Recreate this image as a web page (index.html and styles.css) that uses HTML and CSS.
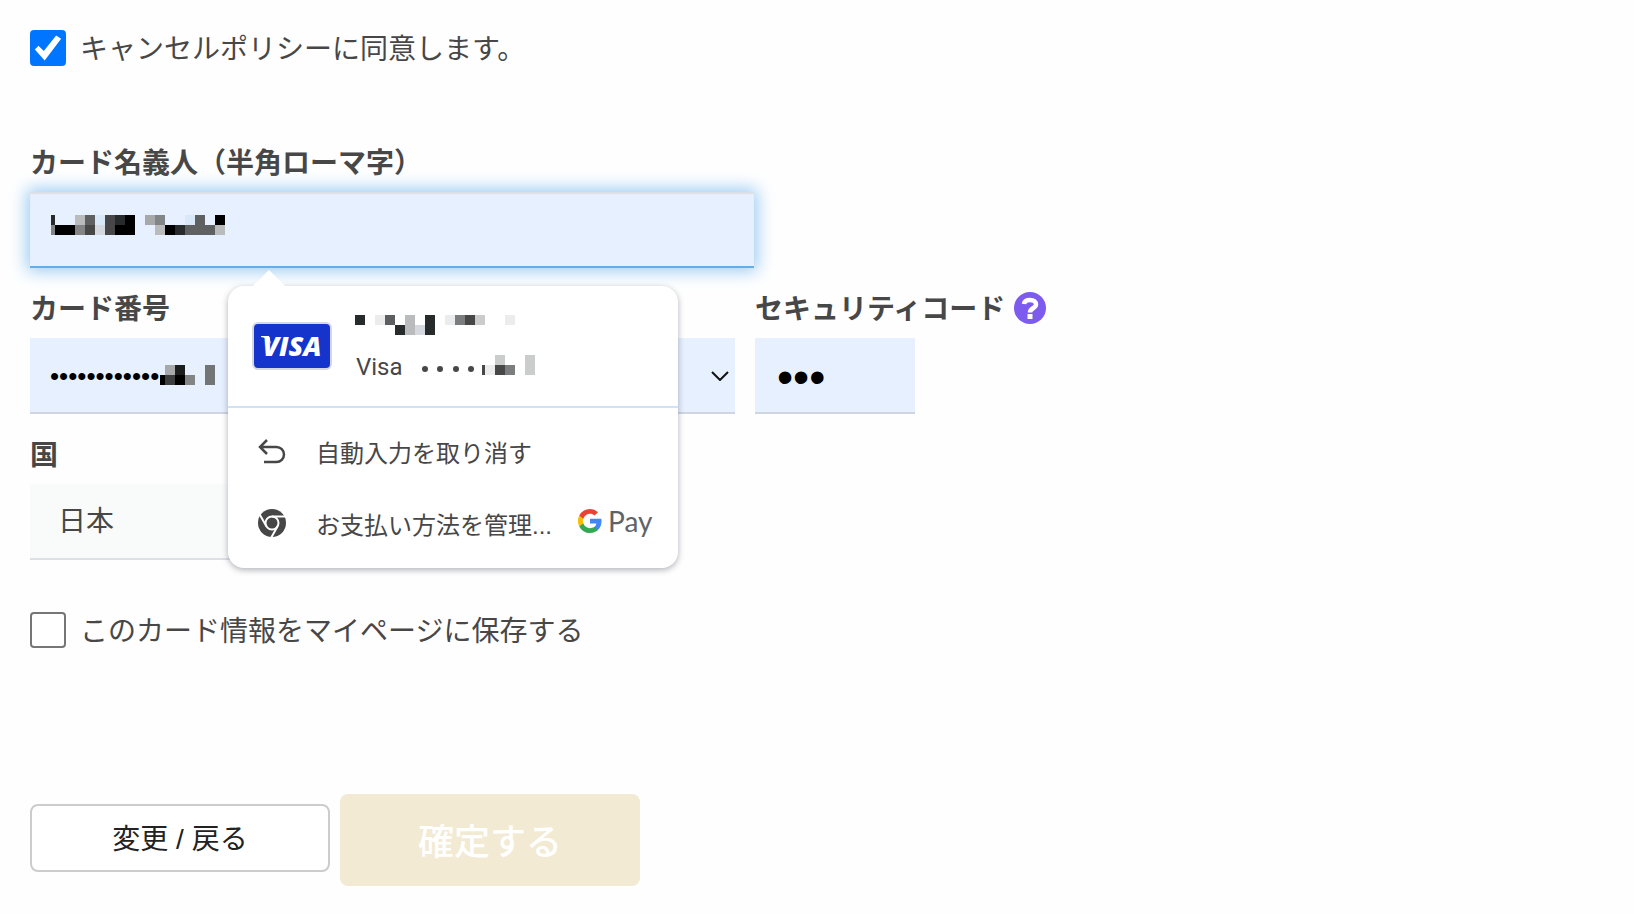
FILE: index.html
```html
<!DOCTYPE html>
<html lang="ja">
<head>
    <meta charset="utf-8">
    <meta name="viewport" content="width=device-width">
    <title>お支払い情報</title>
    <link rel="stylesheet" href="styles.css">
</head>
<body>

<form class="payment">
    <div class="check-row">
        <input class="check" type="checkbox" id="agree" checked>
        <label for="agree">キャンセルポリシーに同意します。</label>
    </div>

    <div class="fields">
        <div class="field field-name">
            <label class="field-label" for="holder">カード名義人（半角ローマ字）</label>
            <div class="control">
                <input class="text-input focused" type="text" id="holder">
                <svg class="mask mask-name" width="174" height="20" viewBox="0 0 174 20" shape-rendering="crispEdges" aria-hidden="true">
                    <path fill="#000" d="M4 10h20v10H4zM64 10h10v10H64zM74 0h10v20H74zM114 10h10v10h-10zM164 0h10v10h-10z"/>
                    <path fill="#282b2b" d="M0 0h4v10H0zM64 0h10v10H64zM124 10h10v10h-10z"/>
                    <path fill="#474747" d="M34 10h10v10H34zM54 0h10v20H54z"/>
                    <path fill="#5f6062" d="M34 0h10v10H34zM134 10h10v10h-10zM144 0h10v20h-10zM154 10h10v10h-10z"/>
                    <path fill="#828486" d="M0 10h4v10H0zM24 10h10v10H24zM104 0h10v10h-10z"/>
                    <path fill="#a6a8aa" d="M94 0h10v10H94z"/>
                    <path fill="#b9bbbd" d="M24 0h10v10H24zM104 10h10v10h-10zM164 10h10v10h-10z"/>
                    <path fill="#d5d8de" d="M44 10h10v10H44z"/>
                    <path fill="#d9e8f8" d="M44 0h10v10H44zM134 0h10v10h-10z"/>
                </svg>

                <div class="autofill">
                    <button class="autofill-card" type="button">
                        <span class="visa">
                            <svg class="visa-wing" width="10" height="8" viewBox="0 0 10 8" aria-hidden="true"><path fill="#fff" d="M0 0h8l2 8Q7 2 0 1z"/></svg>
                            VISA
                        </span>
                        <span class="card-info">
                            <svg width="160" height="20" viewBox="0 0 160 20" shape-rendering="crispEdges" aria-hidden="true">
                                <path fill="#282b2b" d="M0 0h10v10H0zM40 10h10v10H40zM70 0h10v20H70z"/>
                                <path fill="#5d5e60" d="M30 0h10v10H30z"/>
                                <path fill="#474747" d="M110 0h10v10h-10z"/>
                                <path fill="#7c7d7f" d="M100 0h10v10h-10z"/>
                                <path fill="#b9bbbd" d="M50 0h10v20H50z"/>
                                <path fill="#cbcdcd" d="M120 0h10v10h-10z"/>
                                <path fill="#d5d8de" d="M60 10h10v10H60z"/>
                                <path fill="#ececed" d="M20 0h10v10H20zM90 0h10v10H90zM150 0h10v10h-10z"/>
                            </svg>
                            <span class="card-number">
                                Visa
                                <svg width="120" height="20" viewBox="0 0 120 20" aria-hidden="true">
                                    <g fill="#474747"><circle cx="10" cy="14" r="3"/><circle cx="25" cy="14" r="3"/><circle cx="41" cy="14" r="3"/><circle cx="56" cy="14" r="3"/></g>
                                    <g shape-rendering="crispEdges">
                                        <path fill="#474747" d="M67 10h3v10h-3zM80 10h10v10H80z"/>
                                        <path fill="#ececed" d="M70 10h10v10H70z"/>
                                        <path fill="#cbcdcd" d="M80 0h10v10H80zM110 0h10v20h-10z"/>
                                        <path fill="#7c7d7f" d="M90 10h10v10H90z"/>
                                    </g>
                                </svg>
                            </span>
                        </span>
                    </button>
                    <div class="autofill-menu">
                        <button class="menu-item" type="button">
                            <svg width="28" height="28" viewBox="0 0 28 28" fill="none" stroke="#474747" stroke-width="2.500" aria-hidden="true">
                                <path d="M9 3L2 10l7 7M2 10h16.500a7.500 7.500 0 0 1 0 15H6"/>
                            </svg>
                            自動入力を取り消す
                        </button>
                        <button class="menu-item" type="button">
                            <svg width="28" height="28" viewBox="0 0 28 28" aria-hidden="true">
                                <circle cx="14" cy="14" r="14" fill="#474747"/>
                                <g fill="none" stroke="#fff" stroke-width="2">
                                    <circle cx="14" cy="14" r="6.500"/>
                                    <path d="M14 7.500H28M8.400 17.250L1.400 5.100M19.600 17.250L13 29"/>
                                </g>
                            </svg>
                            お支払い方法を管理...
                            <span class="gpay">
                                <svg width="24" height="24" viewBox="0 0 24 24" aria-hidden="true">
                                    <path fill="#4285f4" d="M23.500 12.270c0-.850-.080-1.670-.220-2.460H12v4.650h6.450a5.500 5.500 0 0 1-2.400 3.620v3h3.870c2.270-2.090 3.580-5.170 3.580-8.810z"/>
                                    <path fill="#34a853" d="M12 24c3.240 0 5.960-1.070 7.940-2.910l-3.870-3c-1.080.720-2.450 1.150-4.070 1.150-3.130 0-5.780-2.110-6.730-4.960H1.280v3.100A12 12 0 0 0 12 24z"/>
                                    <path fill="#fbbc04" d="M5.270 14.280a7.200 7.200 0 0 1 0-4.570V6.620h-4a12 12 0 0 0 0 10.760z"/>
                                    <path fill="#ea4335" d="M12 4.750c1.770 0 3.350.610 4.600 1.800l3.420-3.420A11.500 11.500 0 0 0 12 0 12 12 0 0 0 1.280 6.620l3.990 3.090C6.220 6.860 8.870 4.750 12 4.750z"/>
                                </svg>
                                Pay
                            </span>
                        </button>
                    </div>
                </div>
            </div>
        </div>

        <div class="field-row">
            <div class="field field-number">
                <label class="field-label" for="number">カード番号</label>
                <div class="control">
                    <input class="text-input number-input" type="text" id="number" value="••••••••••••">
                    <svg class="mask mask-number" width="55" height="20" viewBox="0 0 55 20" shape-rendering="crispEdges" aria-hidden="true">
                        <path fill="#000" d="M0 10h5v10H0zM15 10h10v10H15z"/>
                        <path fill="#1c1e1e" d="M15 0h10v10H15z"/>
                        <path fill="#3c3d3e" d="M5 10h10v10H5z"/>
                        <path fill="#a6a8aa" d="M5 0h10v10H5z"/>
                        <path fill="#828486" d="M25 10h10v10H25z"/>
                        <path fill="#737476" d="M45 0h10v20H45z"/>
                    </svg>
                    <svg class="chevron" width="18" height="10" viewBox="0 0 18 10" aria-hidden="true">
                        <path fill="none" stroke="#111" stroke-width="2" d="M1 1l8 8 8-8"/>
                    </svg>
                </div>
            </div>
            <div class="field field-code">
                <label class="field-label" for="code">セキュリティコード
                    <svg class="help" width="32" height="34" viewBox="0 -2 32 34" aria-hidden="true">
                        <circle cx="16" cy="16" r="16" fill="#7e5bef"/>
                        <path fill="none" stroke="#fff" stroke-width="4.500" d="M10 12C10.500 8.500 13 8 16 8c4 0 6 2 6 4.500 0 4-6 3.500-6 8"/>
                        <path fill="#fff" d="M13.500 22h5v5h-5z"/>
                    </svg>
                </label>
                <input class="text-input code-input" type="password" id="code" value="123">
            </div>
        </div>

        <div class="field field-country">
            <label class="field-label" for="country">国</label>
            <select class="country" id="country">
                <option>日本</option>
            </select>
        </div>
    </div>

    <div class="check-row">
        <input class="check" type="checkbox" id="save">
        <label for="save">このカード情報をマイページに保存する</label>
    </div>

    <div class="actions">
        <button class="btn-back" type="button">変更 / 戻る</button>
        <button class="btn-submit" type="submit">確定する</button>
    </div>
</form>

</body>
</html>
```
FILE: styles.css
```css
* {
    box-sizing: border-box;
}

body {
    margin: 0;
    background: #fefefe;
    color: #474747;
    font-family: "Liberation Sans", "Noto Sans CJK JP", sans-serif;
    font-size: 28px;
}

button, input, select {
    font-family: inherit;
    color: inherit;
}

svg {
    flex-shrink: 0;
}

.payment {
    max-width: 945px;
    padding: 30px;
}

.check-row {
    display: flex;
    align-items: center;
    gap: 14px;
    height: 36px;
    white-space: nowrap;
}

.check-row label {
    padding-bottom: 2px;
}

.check {
    appearance: none;
    display: grid;
    place-items: center;
    width: 36px;
    height: 36px;
    margin: 0;
    border: 2px solid #767676;
    border-radius: 4px;
    background: #fff;
}

.check:checked {
    border-color: #0075ff;
    background: #0075ff;
}

.check:checked::before {
    content: "";
    width: 28px;
    height: 28px;
    background: #fff;
    clip-path: polygon(3% 55%, 16% 42%, 35% 61%, 79% 5%, 97% 17%, 38% 95%);
}

.fields {
    margin: 76px 0 52px;
    display: flex;
    flex-direction: column;
    gap: 20px;
}

.field-name {
    max-width: 724px;
}

.field-row {
    display: flex;
    gap: 20px;
}

.field-number {
    flex: 1;
}

.field-code {
    width: 160px;
}

.field-country {
    max-width: 640px;
}

.field-label {
    display: flex;
    align-items: center;
    gap: 9px;
    height: 40px;
    margin-bottom: 10px;
    padding-bottom: 2px;
    font-weight: bold;
    white-space: nowrap;
}

.control {
    position: relative;
}

.text-input {
    display: block;
    width: 100%;
    height: 76px;
    padding: 0 20px;
    border: 0;
    border-bottom: 2px solid #cfd6e0;
    border-radius: 0;
    outline: 0;
    background: #e6f0ff;
    color: #000;
    font-size: 26px;
}

.focused {
    border-bottom-color: #63ade8;
    box-shadow: 0 0 16px 3px #99caf4, inset 0 2px 1px #dcdfe6;
}

.number-input {
    padding-top: 2px;
}

.code-input {
    padding: 4px 22px 0;
    font-size: 46px;
}

.mask {
    position: absolute;
}

.mask-name {
    top: 23px;
    left: 21px;
}

.mask-number {
    top: 27px;
    left: 130px;
}

.chevron {
    position: absolute;
    top: 33px;
    right: 6px;
}

.country {
    appearance: none;
    display: block;
    width: 100%;
    height: 76px;
    padding: 0 28px;
    border: 0;
    border-bottom: 2px solid #dcdfe6;
    border-radius: 0;
    background: #f9fbfb;
    font-size: 28px;
}

/* autofill popup */
.autofill {
    position: absolute;
    z-index: 1;
    top: 94px;
    left: 198px;
    width: 450px;
    border-radius: 16px;
    background: #fff;
    box-shadow: 0 2px 6px rgba(60, 64, 80, 0.4);
}

.autofill::before {
    content: "";
    position: absolute;
    top: -16px;
    left: 24px;
    width: 34px;
    height: 17px;
    background: #fff;
    clip-path: polygon(50% 0, 100% 100%, 0 100%);
}

.autofill-card {
    display: flex;
    align-items: center;
    gap: 23px;
    width: 100%;
    height: 122px;
    padding: 0 24px;
    border: 0;
    border-bottom: 2px solid #cfe2f7;
    background: none;
    font-size: 24px;
}

.visa {
    position: relative;
    width: 80px;
    height: 48px;
    border: 2px solid #d5d8e2;
    border-radius: 6px;
    background: #1434cb;
    color: #fff;
    font: italic 800 27px/44px "Open Sans", sans-serif;
}

.visa-wing {
    position: absolute;
    top: 12px;
    left: 7px;
}

.card-info {
    display: flex;
    flex-direction: column;
    gap: 18px;
    padding-top: 4px;
}

.card-number {
    display: flex;
    align-items: center;
    gap: 12px;
    padding-left: 1px;
    line-height: 28px;
    font-family: Roboto, sans-serif;
}

.card-number svg {
    margin-bottom: 4px;
}

.autofill-menu {
    padding: 8px 0;
}

.menu-item {
    display: flex;
    align-items: center;
    gap: 30px;
    width: 100%;
    height: 72px;
    padding: 0 24px 2px 30px;
    border: 0;
    background: none;
    font-size: 24px;
    white-space: nowrap;
}

.gpay {
    display: flex;
    align-items: center;
    gap: 6px;
    margin-left: -4px;
    padding-bottom: 4px;
    color: #5f6368;
    font: 28px/32px Lato, sans-serif;
}

.actions {
    display: flex;
    align-items: center;
    gap: 10px;
    margin-top: 146px;
}

.btn-back,
.btn-submit {
    width: 300px;
    border-radius: 8px;
    padding-bottom: 4px;
}

.btn-back {
    height: 68px;
    margin-bottom: 4px;
    border: 2px solid #ccc;
    background: #fff;
    color: #222;
    font-size: 28px;
}

.btn-submit {
    height: 92px;
    border: 0;
    background: #f2ead2;
    color: #fff;
    font-size: 36px;
    font-weight: 500;
}
```
